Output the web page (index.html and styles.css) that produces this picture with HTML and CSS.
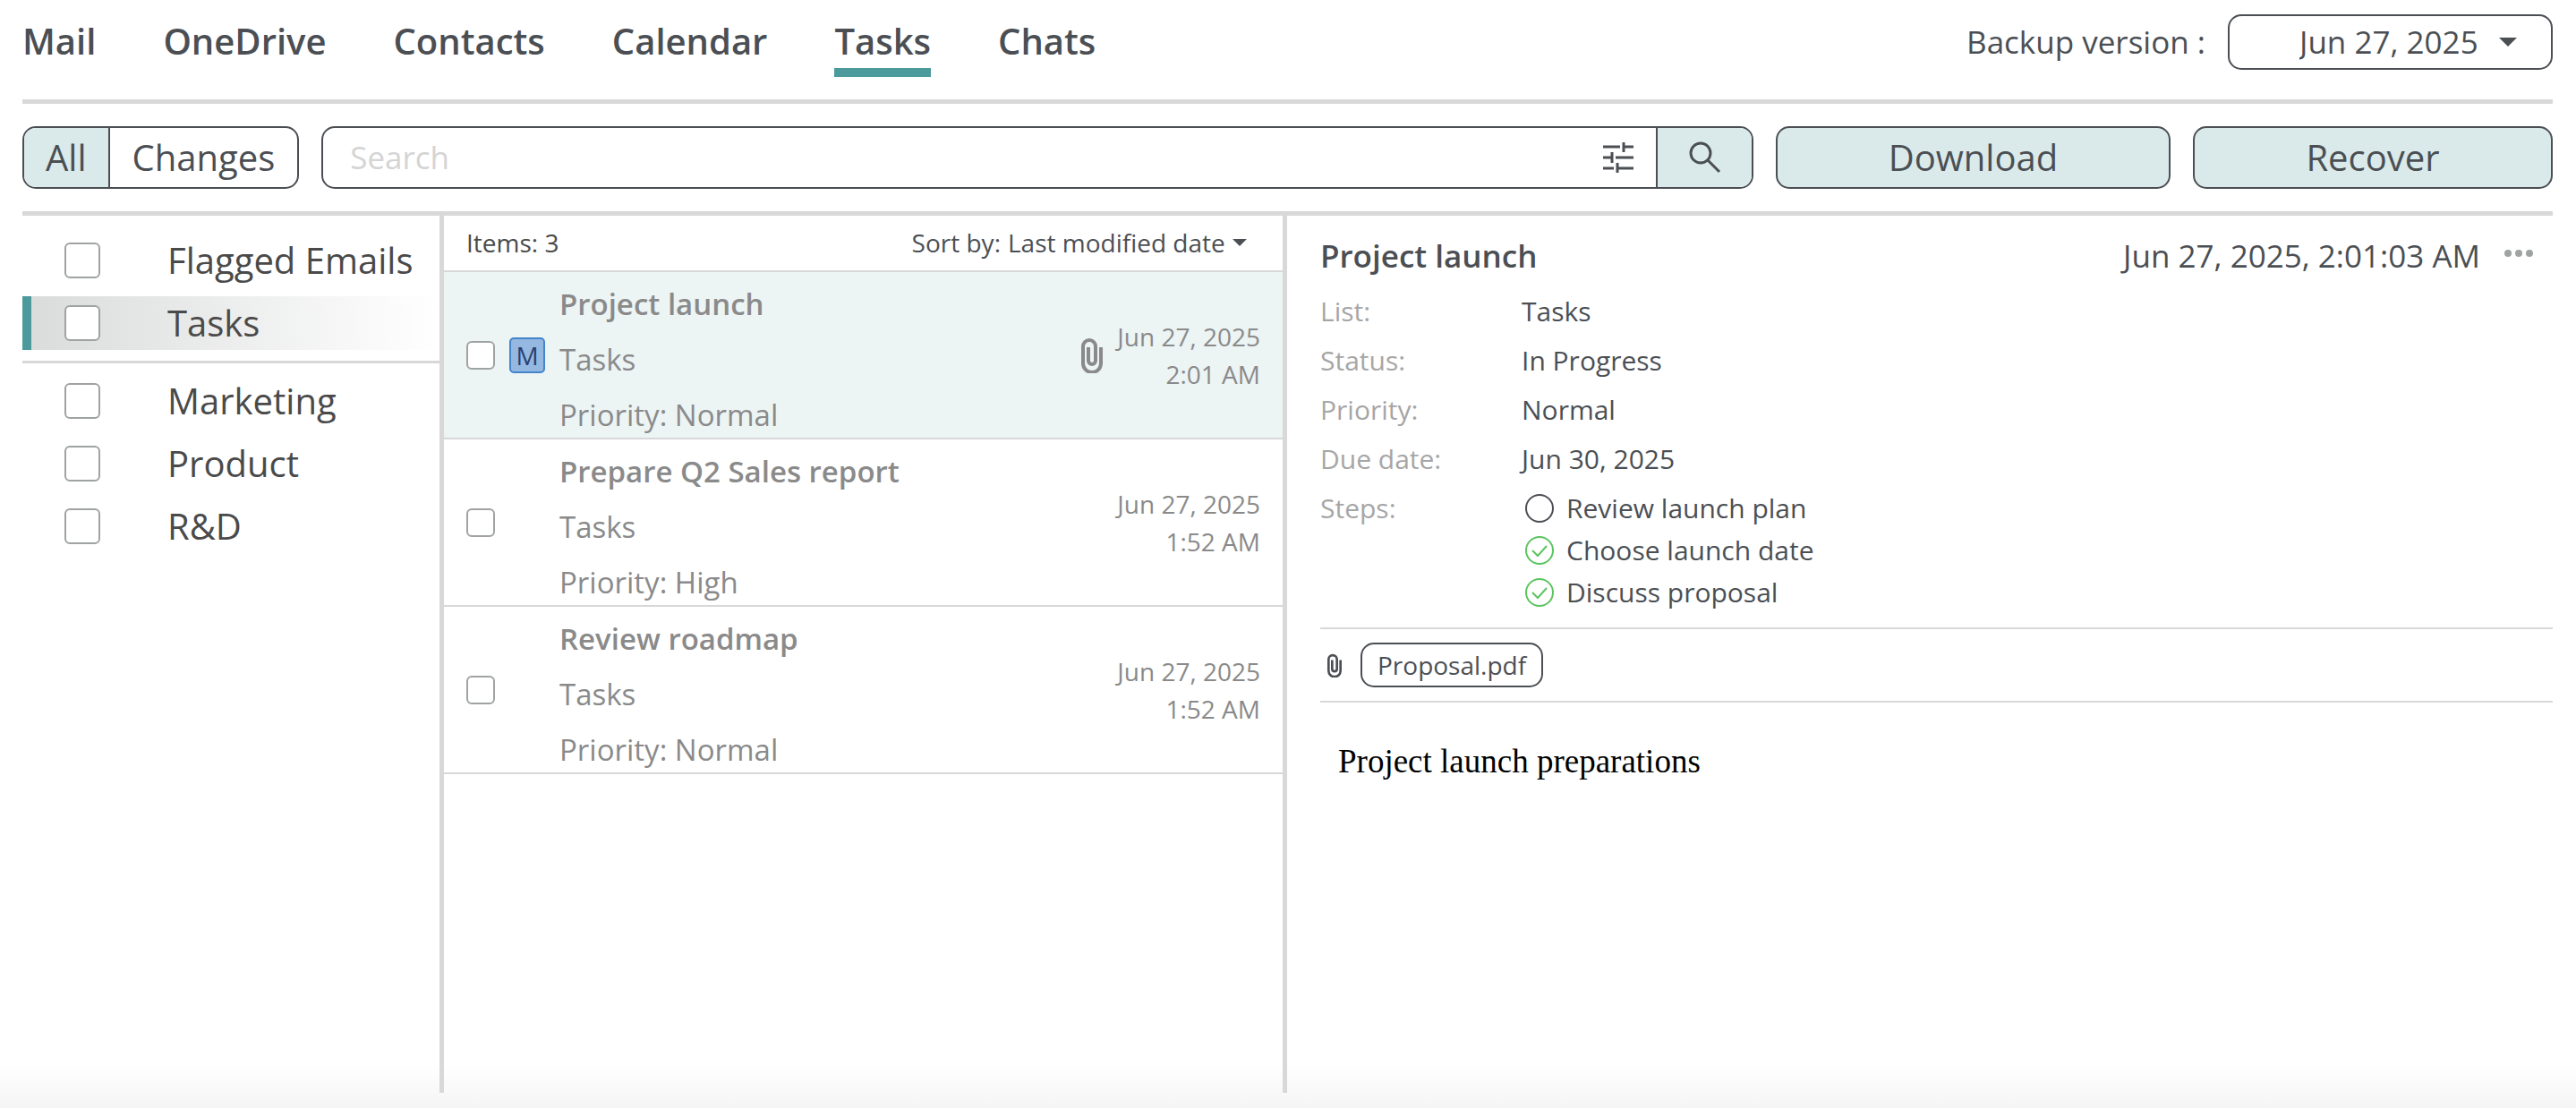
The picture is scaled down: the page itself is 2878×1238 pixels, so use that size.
FILE: index.html
```
<!DOCTYPE html>
<html lang="en">
	<head>
		<meta charset="utf-8">
		<title>Tasks</title>
		<link rel="stylesheet" href="styles.css">
	</head>
	<body>
		<div class="page">
			<header class="top-bar">
				<nav class="tabs">
					<a href="#">Mail</a>
					<a href="#">OneDrive</a>
					<a href="#">Contacts</a>
					<a href="#">Calendar</a>
					<a href="#" class="active">Tasks</a>
					<a href="#">Chats</a>
				</nav>
				<div class="version">
					<label for="version">Backup version :</label>
					<div class="version-box">
						<select id="version">
							<option>Jun 27, 2025</option>
						</select>
						<svg class="caret" width="20" height="10" viewBox="0 0 20 10"><path d="M0 0h20L10 10z"/></svg>
					</div>
				</div>
			</header>

			<div class="toolbar">
				<div class="switch">
					<button class="on">All</button>
					<button>Changes</button>
				</div>
				<form class="search">
					<input type="text" placeholder="Search" aria-label="Search">
					<button type="button" class="filter-btn" aria-label="Filters">
						<svg width="36" height="36" viewBox="0 0 36 36"><path d="M1 6h19M24 6h11M24 1v11M1 18h10M15 18h20M11 12v12M1 30h12M17 30h18M17 24v11"/></svg>
					</button>
					<button type="button" class="search-btn" aria-label="Run search">
						<svg width="36" height="36" viewBox="0 0 36 36"><circle cx="13" cy="13" r="11"/><path d="M21 21l13 13"/></svg>
					</button>
				</form>
				<button class="action download">Download</button>
				<button class="action recover">Recover</button>
			</div>

			<main class="columns">
				<aside class="folders">
					<ul>
						<li><label><input type="checkbox" class="check">Flagged Emails</label></li>
						<li class="current"><label><input type="checkbox" class="check">Tasks</label></li>
					</ul>
					<ul>
						<li><label><input type="checkbox" class="check">Marketing</label></li>
						<li><label><input type="checkbox" class="check">Product</label></li>
						<li><label><input type="checkbox" class="check">R&amp;D</label></li>
					</ul>
				</aside>

				<section class="items">
					<div class="items-head">
						<span>Items: 3</span>
						<div class="sort">
							<label for="sort">Sort by:</label>
							<select id="sort">
								<option>Last modified date</option>
							</select>
							<svg class="caret" width="16" height="8" viewBox="0 0 20 10"><path d="M0 0h20L10 10z"/></svg>
						</div>
					</div>
					<article class="item selected">
						<input type="checkbox" class="check small" aria-label="Project launch">
						<span class="badge">M</span>
						<div class="item-text">
							<h3>Project launch</h3>
							<p>Tasks</p>
							<p>Priority: Normal</p>
						</div>
						<svg class="clip" width="24" height="40" viewBox="0 0 24 40"><path d="M22 11v18a9.500 9.500 0 0 1-20 0V10a7 7 0 0 1 14 0v16a4 4 0 0 1-8 0V11"/></svg>
						<div class="item-date">Jun 27, 2025<br>2:01 AM</div>
					</article>
					<article class="item">
						<input type="checkbox" class="check small" aria-label="Prepare Q2 Sales report">
						<span class="badge-space"></span>
						<div class="item-text">
							<h3>Prepare Q2 Sales report</h3>
							<p>Tasks</p>
							<p>Priority: High</p>
						</div>
						<div class="item-date">Jun 27, 2025<br>1:52 AM</div>
					</article>
					<article class="item">
						<input type="checkbox" class="check small" aria-label="Review roadmap">
						<span class="badge-space"></span>
						<div class="item-text">
							<h3>Review roadmap</h3>
							<p>Tasks</p>
							<p>Priority: Normal</p>
						</div>
						<div class="item-date">Jun 27, 2025<br>1:52 AM</div>
					</article>
				</section>

				<section class="detail">
					<div class="detail-head">
						<h2>Project launch</h2>
						<span class="detail-date">Jun 27, 2025, 2:01:03 AM</span>
						<button class="more" aria-label="More">
							<svg width="32" height="8" viewBox="0 0 32 8"><circle cx="4" cy="4" r="4"/><circle cx="16" cy="4" r="4"/><circle cx="28" cy="4" r="4"/></svg>
						</button>
					</div>
					<dl class="fields">
						<dt>List:</dt>
						<dd>Tasks</dd>
						<dt>Status:</dt>
						<dd>In Progress</dd>
						<dt>Priority:</dt>
						<dd>Normal</dd>
						<dt>Due date:</dt>
						<dd>Jun 30, 2025</dd>
						<dt>Steps:</dt>
						<dd>
							<ul class="steps">
								<li>
									<svg width="32" height="32" viewBox="0 0 32 32"><circle cx="16" cy="16" r="15"/></svg>
									Review launch plan
								</li>
								<li class="done">
									<svg width="32" height="32" viewBox="0 0 32 32"><circle cx="16" cy="16" r="15"/><path d="M8 16l6 6 10-11"/></svg>
									Choose launch date
								</li>
								<li class="done">
									<svg width="32" height="32" viewBox="0 0 32 32"><circle cx="16" cy="16" r="15"/><path d="M8 16l6 6 10-11"/></svg>
									Discuss proposal
								</li>
							</ul>
						</dd>
					</dl>
					<div class="attachments">
						<svg class="clip" width="16" height="27" viewBox="0 0 24 40"><path d="M22 11v18a9.500 9.500 0 0 1-20 0V10a7 7 0 0 1 14 0v16a4 4 0 0 1-8 0V11"/></svg>
						<button class="file">Proposal.pdf</button>
					</div>
					<div class="note">Project launch preparations</div>
				</section>
			</main>
		</div>
	</body>
</html>
```
FILE: styles.css
```
*{
	box-sizing: border-box;
}
body{
	margin: 0;
	font-family: "Open Sans", sans-serif;
	color: #4b4f54;
	background: #fff;
}
h2,h3,p,ul,dl,dd{
	margin: 0;
	padding: 0;
}
ul{
	list-style: none;
}
button,input,select{
	font: inherit;
	color: inherit;
	margin: 0;
}
button{
	background: none;
	border: none;
	padding: 0;
}
select{
	appearance: none;
	background: none;
	border: none;
	padding: 0;
	outline: none;
}
svg{
	display: block;
	flex: none;
	fill: none;
	stroke: currentColor;
}
.caret,.more svg{
	fill: currentColor;
	stroke: none;
}
.page{
	display: flex;
	flex-direction: column;
	min-height: 100vh;
	padding: 0 26px 17px 25px;
	background: linear-gradient(to top, #f5f5f5, #fff 50px);
}

/* top bar */
.top-bar{
	display: flex;
	justify-content: space-between;
	align-items: flex-start;
	height: 116px;
	padding-top: 16px;
	border-bottom: 5px solid #d8d8d8;
}
.tabs{
	display: flex;
	gap: 75px;
	font-size: 40px;
	font-weight: 600;
	line-height: 60px;
}
.tabs a{
	color: inherit;
	text-decoration: none;
	border-bottom: 10px solid transparent;
}
.tabs .active{
	border-color: #4c9a9b;
}
.version{
	display: flex;
	align-items: center;
	gap: 25px;
	font-size: 35px;
}
.version label,.version select{
	padding-bottom: 2px;
}
.version-box{
	display: flex;
	align-items: center;
	justify-content: flex-end;
	gap: 23px;
	width: 363px;
	height: 62px;
	padding-right: 38px;
	border: 2px solid #4b4f54;
	border-radius: 15px;
}

/* toolbar */
.toolbar{
	display: flex;
	gap: 25px;
	padding: 25px 0;
	border-bottom: 5px solid #d8d8d8;
	font-size: 40px;
}
.switch,.search,.action{
	height: 70px;
	border: 2px solid #4b4f54;
	border-radius: 15px;
	overflow: hidden;
}
.switch{
	display: flex;
}
.switch button{
	padding: 0 25px 2px;
}
.switch .on{
	padding: 0 24px 2px;
	border-right: 2px solid #4b4f54;
}
.switch .on,.search-btn,.action{
	background: #daeaea;
}
.action{
	padding-bottom: 2px;
}
.search{
	display: flex;
	flex: 1;
}
.search input{
	flex: 1;
	min-width: 0;
	padding: 0 30px 2px;
	border: none;
	outline: none;
	background: none;
	font-size: 35px;
}
.search input::placeholder{
	color: #d4d4d4;
}
.search svg{
	stroke-width: 3px;
}
.filter-btn{
	padding-right: 24px;
}
.search-btn{
	display: flex;
	align-items: center;
	justify-content: center;
	width: 107px;
	border-left: 2px solid #4b4f54;
}
.download{
	width: 441px;
}
.recover{
	width: 402px;
}

/* columns */
.columns{
	display: flex;
	flex: 1;
}
.check{
	appearance: none;
	flex: none;
	width: 40px;
	height: 40px;
	border: 2px solid #9fa3a1;
	border-radius: 6px;
	background: #fff;
}
.check.small{
	width: 32px;
	height: 32px;
}
.check:checked{
	background: #4c9a9b;
}
.folders{
	width: 471px;
	border-right: 5px solid #d8d8d8;
	font-size: 40px;
	line-height: 60px;
	color: #4a4a4a;
}
.folders ul{
	display: grid;
	gap: 10px;
	padding: 12px 0;
}
.folders ul:first-child{
	padding-top: 20px;
	border-bottom: 3px solid #d8d8d8;
}
.folders li{
	border-left: 10px solid transparent;
}
.folders .current{
	border-color: #4c9a9b;
	background: linear-gradient(to right, #dadcdb, #fff) padding-box;
}
.folders label{
	display: flex;
	align-items: center;
	gap: 75px;
	padding-left: 37px;
	white-space: nowrap;
}
.items{
	width: 942px;
	border-right: 5px solid #d8d8d8;
}
.items-head{
	display: flex;
	justify-content: space-between;
	align-items: center;
	height: 63px;
	padding: 0 40px 2px 25px;
	border-bottom: 2px solid #d8d8d8;
	font-size: 28px;
	color: #4a4a4a;
}
.sort{
	display: flex;
	align-items: center;
	gap: 8px;
	color: #4b4f54;
}
.item{
	display: flex;
	align-items: center;
	gap: 16px;
	padding: 0 25px;
	border-bottom: 2px solid #d8d8d8;
	color: #8a8a8a;
}
.item.selected{
	background: #ecf4f4;
}
.badge,.badge-space{
	width: 40px;
	height: 40px;
}
.badge{
	border: 2px solid #4484cb;
	border-radius: 5px;
	background: #94b8df;
	color: #2c3e70;
	font-size: 28px;
	line-height: 36px;
	text-align: center;
}
.item-text{
	display: grid;
	flex: 1;
	gap: 12px;
	padding-top: 11px;
	font-size: 33px;
	line-height: 50px;
}
.item-text h3{
	font-size: inherit;
	font-weight: 600;
}
.item-date{
	font-size: 28px;
	line-height: 42px;
	text-align: right;
}
.clip{
	stroke-width: 4px;
}

/* detail pane */
.detail{
	flex: 1;
	padding-left: 37px;
}
.detail-head{
	display: flex;
	align-items: center;
	padding-top: 20px;
	font-size: 35px;
	line-height: 50px;
}
.detail-head h2{
	flex: 1;
	font-size: inherit;
	font-weight: 600;
}
.more{
	padding: 0 22px 6px 27px;
	color: #9fa3a1;
}
.fields{
	display: grid;
	grid-template-columns: 225px 1fr;
	row-gap: 8px;
	padding: 13px 0 16px;
	border-bottom: 2px solid #d8d8d8;
	font-size: 30px;
	line-height: 47px;
}
.fields dt{
	color: #a6a6a6;
}
.steps li{
	display: flex;
	align-items: center;
	gap: 14px;
	padding-left: 4px;
}
.steps svg{
	stroke-width: 2px;
}
.steps .done svg{
	color: #5bc45f;
}
.attachments{
	display: flex;
	align-items: center;
	gap: 21px;
	padding: 15px 8px;
	border-bottom: 2px solid #d8d8d8;
}
.file{
	height: 50px;
	padding: 0 17px;
	border: 2px solid #4b4f54;
	border-radius: 15px;
	font-size: 28px;
}
.note{
	padding: 44px 20px;
	font-family: "Liberation Serif", serif;
	font-size: 37px;
	color: #000;
}
```
